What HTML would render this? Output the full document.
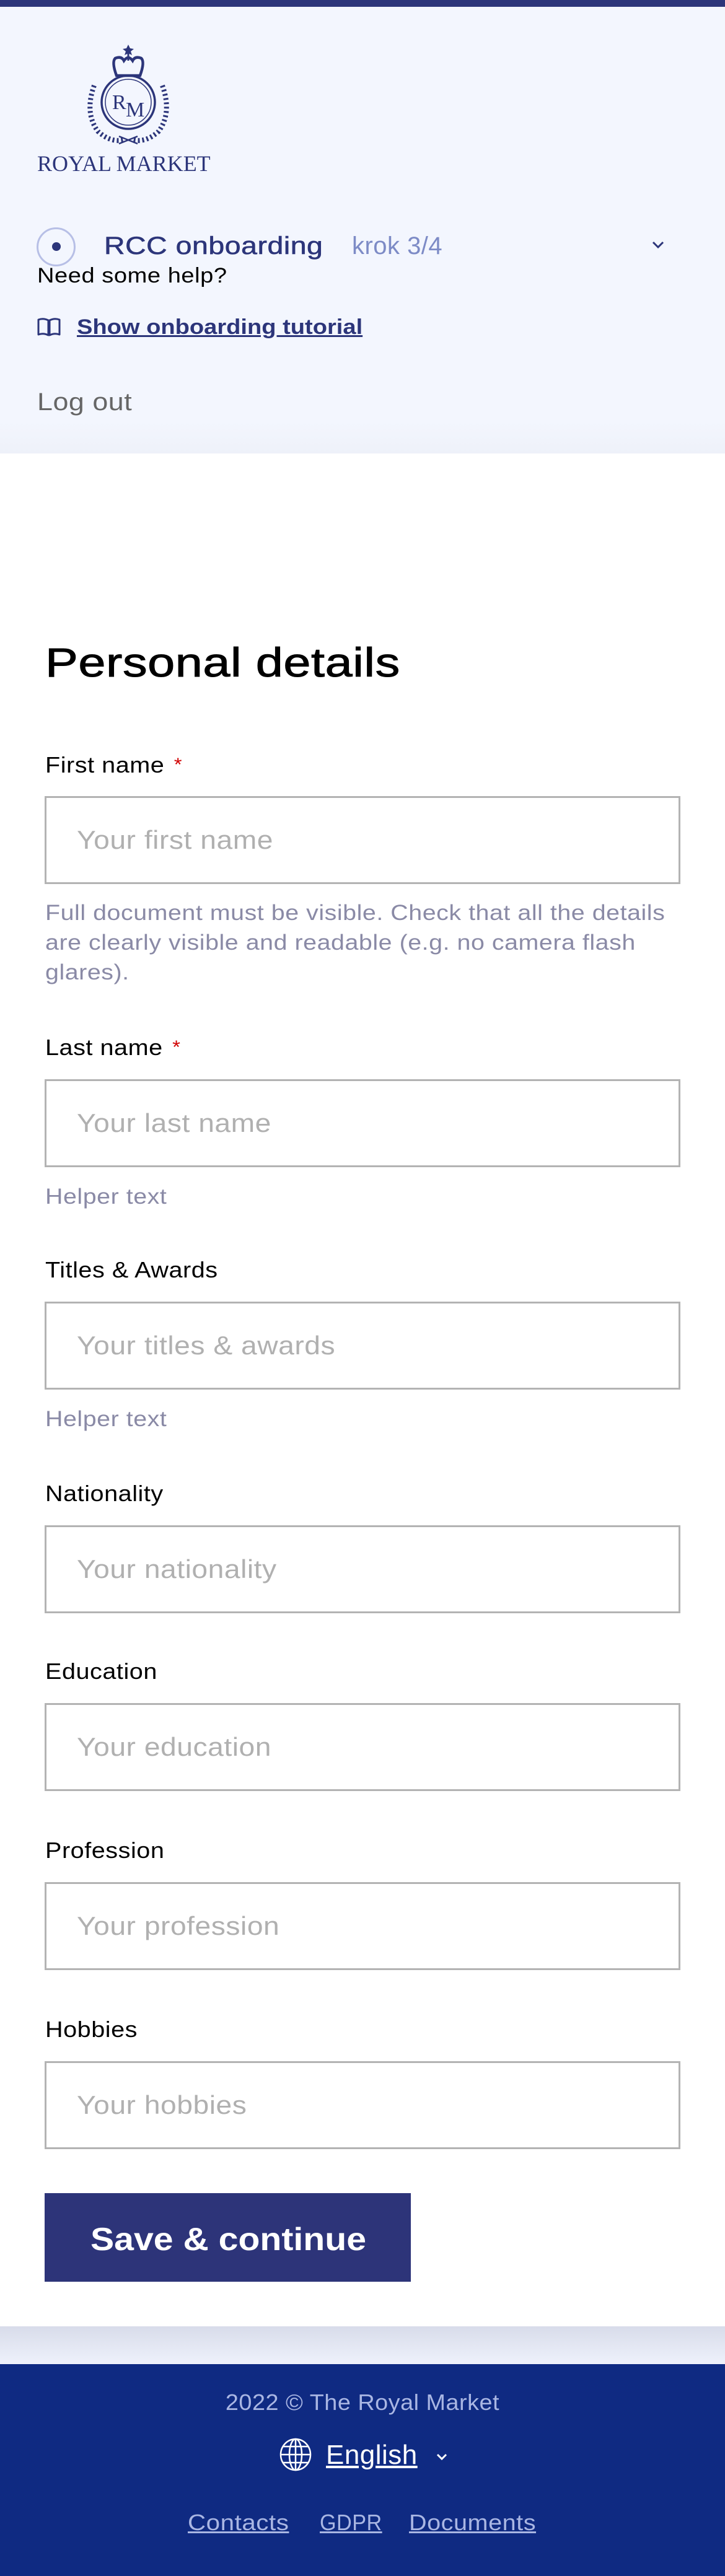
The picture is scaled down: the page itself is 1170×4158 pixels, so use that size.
<!DOCTYPE html>
<html><head><meta charset="utf-8">
<style>
*{margin:0;padding:0;box-sizing:border-box}
body{width:1170px;height:4158px;position:relative;background:#fff;font-family:"Liberation Sans",sans-serif;overflow:hidden;letter-spacing:.03em}
.a{position:absolute;white-space:nowrap}
.s{transform:scaleX(1.12);transform-origin:0 0}
.hdr{position:absolute;left:0;top:0;width:1170px;height:732px;background:linear-gradient(#f3f6fe 0,#f3f6fe 680px,#eef1f9 732px)}
.bar{position:absolute;left:0;top:0;width:1170px;height:11px;background:#2c357a}
.lbl{font-size:36px;line-height:36px;color:#000;left:73px;transform:scaleX(1.1);transform-origin:0 0}
.lbl .r{color:#d10000;font-size:30px;margin-left:14px;vertical-align:top}
.inp{position:absolute;left:72px;width:1026px;height:142px;border:3px solid #b3b3b3;display:flex;align-items:center;padding-left:49px;font-size:42px;color:#b0b0b0}
.inp span{display:inline-block;transform:scaleX(1.1);transform-origin:0 50%}
.help{font-size:35px;line-height:48px;color:#8a8aa6;left:73px;transform:scaleX(1.125);transform-origin:0 0}
.foot{position:absolute;left:0;top:3816px;width:1170px;height:342px;background:#0f2a82}
.shadow{position:absolute;left:0;top:3755px;width:1170px;height:61px;background:linear-gradient(#d8dcea,#eef1fb)}
</style></head><body>
<div class="hdr"></div>
<div class="bar"></div>
<svg class="a" style="left:130px;top:60px" width="160" height="180" viewBox="0 0 160 180">
 <g fill="none" stroke="#2c357a">
  <circle cx="77" cy="105" r="43" stroke-width="3.5"/>
  <circle cx="77" cy="105" r="37" stroke-width="1.5"/>
  <path d="M58 62 Q50 40 56 34 Q66 30 70 38 Q77 28 84 38 Q88 30 98 34 Q104 40 96 62 Z" stroke-width="4.5"/>
  <path d="M77 24 l0 14" stroke-width="3"/>
  <path d="M22 78 Q6 122 28 152 Q50 172 72 165" stroke-width="8" stroke-dasharray="3 4"/>
  <path d="M132 78 Q148 122 126 152 Q104 172 82 165" stroke-width="8" stroke-dasharray="3 4"/>
  <path d="M62 172 L92 160 M92 172 L62 160" stroke-width="2.5"/>
 </g>
 <path d="M77 12 l3 6 6 1 -5 4 2 6 -6 -3 -6 3 2 -6 -5 -4 6 -1z" fill="#2c357a"/>
 <text x="51" y="116" font-family="Liberation Serif" font-size="34" fill="#2c357a">R</text>
 <text x="73" y="128" font-family="Liberation Serif" font-size="34" fill="#2c357a">M</text>
</svg>
<div class="a" style="left:60px;top:246px;font-family:'Liberation Serif',serif;font-size:36px;line-height:36px;color:#2c357a;letter-spacing:0">ROYAL MARKET</div>
<div class="a" style="left:59px;top:367px;width:63px;height:63px;border-radius:50%;border:3px solid #b7bfe6"></div>
<div class="a" style="left:84px;top:391px;width:14px;height:14px;border-radius:50%;background:#2c357a"></div>
<div class="a" style="left:168px;top:377px;font-size:40px;line-height:40px;color:#2c357a;transform:scaleX(1.16);transform-origin:0 0;-webkit-text-stroke:.6px #2c357a">RCC onboarding</div>
<div class="a" style="left:568px;top:377px;font-size:40px;line-height:40px;color:#7d8bc6">krok 3/4</div>
<svg class="a" style="left:1050px;top:386px" width="24" height="20" viewBox="0 0 24 20"><path d="M4 5 L12 13 L20 5" fill="none" stroke="#2c357a" stroke-width="3"/></svg>
<div class="a s" style="left:60px;top:428px;font-size:34px;line-height:34px;color:#000">Need some help?</div>
<svg class="a" style="left:60px;top:513px" width="38" height="32" viewBox="0 0 38 32"><path d="M2 3 Q10 0 18 4 L18 28 Q10 24 2 27 Z M36 3 Q28 0 20 4 L20 28 Q28 24 36 27 Z" fill="none" stroke="#2c357a" stroke-width="3" stroke-linejoin="round"/></svg>
<div class="a s" style="left:124px;top:511px;font-size:34px;line-height:34px;color:#2c357a;font-weight:bold;text-decoration:underline;letter-spacing:0">Show onboarding tutorial</div>
<div class="a s" style="left:60px;top:629px;font-size:40px;line-height:40px;color:#666">Log out</div>

<div class="a" style="left:73px;top:1036px;font-size:66px;line-height:66px;color:#000;transform:scaleX(1.2);transform-origin:0 0;-webkit-text-stroke:1px #000">Personal details</div>

<div class="a lbl" style="top:1217px">First name<span class="r">*</span></div>
<div class="inp" style="top:1285px"><span>Your first name</span></div>
<div class="a help" style="top:1450px">Full document must be visible. Check that all the details<br>are clearly visible and readable (e.g. no camera flash<br>glares).</div>

<div class="a lbl" style="top:1673px">Last name<span class="r">*</span></div>
<div class="inp" style="top:1742px"><span>Your last name</span></div>
<div class="a help" style="top:1908px">Helper text</div>

<div class="a lbl" style="top:2032px">Titles &amp; Awards</div>
<div class="inp" style="top:2101px"><span>Your titles &amp; awards</span></div>
<div class="a help" style="top:2267px">Helper text</div>

<div class="a lbl" style="top:2393px">Nationality</div>
<div class="inp" style="top:2462px"><span>Your nationality</span></div>

<div class="a lbl" style="top:2680px">Education</div>
<div class="inp" style="top:2749px"><span>Your education</span></div>

<div class="a lbl" style="top:2969px">Profession</div>
<div class="inp" style="top:3038px"><span>Your profession</span></div>

<div class="a lbl" style="top:3258px">Hobbies</div>
<div class="inp" style="top:3327px"><span>Your hobbies</span></div>

<div class="a" style="left:72px;top:3540px;width:591px;height:143px;background:#2d3479"></div>
<div class="a" style="left:146px;top:3589px;font-size:52px;line-height:52px;color:#fff;font-weight:bold;letter-spacing:0;transform:scaleX(1.1);transform-origin:0 0">Save &amp; continue</div>

<div class="shadow"></div>
<div class="foot"></div>
<div class="a" style="left:0;width:1170px;text-align:center;top:3860px;font-size:36px;line-height:36px;color:#a9b6e3;transform:scaleX(1.05)">2022 © The Royal Market</div>
<svg class="a" style="left:451px;top:3935px" width="52" height="54" viewBox="0 0 52 54"><g fill="none" stroke="#fff" stroke-width="2.5"><ellipse cx="26" cy="27" rx="24" ry="25"/><ellipse cx="26" cy="27" rx="10" ry="25"/><path d="M26 2 V52 M2 27 H50 M6 14 H46 M6 40 H46"/></g></svg>
<div class="a" style="left:526px;top:3941px;font-size:44px;line-height:44px;color:#fff;text-decoration:underline">English</div>
<svg class="a" style="left:702px;top:3958px" width="22" height="16" viewBox="0 0 22 16"><path d="M4 4 L11 11 L18 4" fill="none" stroke="#fff" stroke-width="3"/></svg>
<div class="a" style="left:303px;top:4054px;font-size:36px;line-height:36px;color:#a9b6e3;text-decoration:underline;transform:scaleX(1.12);transform-origin:0 0">Contacts</div>
<div class="a" style="left:516px;top:4054px;font-size:36px;line-height:36px;color:#a9b6e3;text-decoration:underline;transform:scaleX(.95);transform-origin:0 0">GDPR</div>
<div class="a" style="left:660px;top:4054px;font-size:36px;line-height:36px;color:#a9b6e3;text-decoration:underline;transform:scaleX(1.1);transform-origin:0 0">Documents</div>
</body></html>
